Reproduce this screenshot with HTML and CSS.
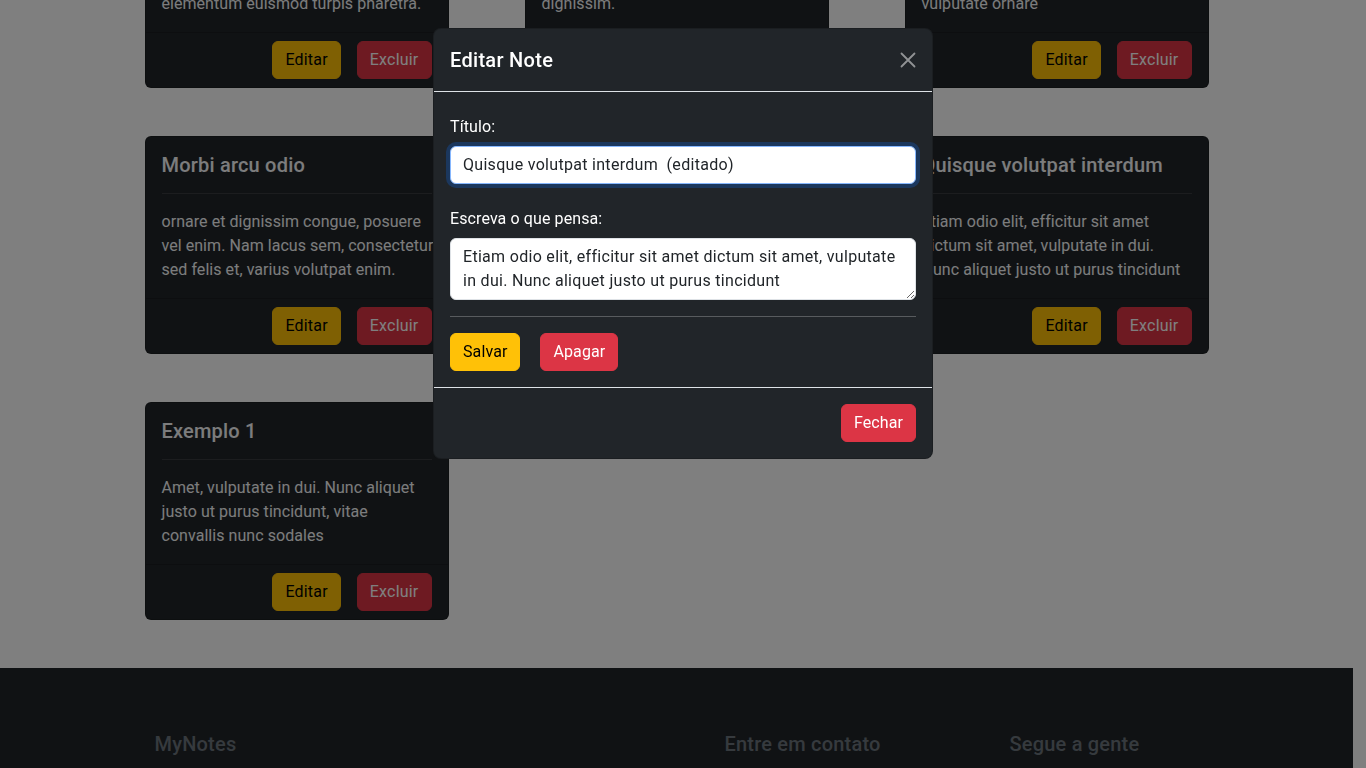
FILE: index.html
```html
<!DOCTYPE html>
<html lang="pt-BR">
<head>
<meta charset="utf-8">
<title>MyNotes</title>
<link rel="stylesheet" href="styles.css">
</head>
<body class="modal-open">
  <nav class="topbar">
    <div class="topbar-inner">
      <span class="brand">MyNotes</span>
      <span class="topbar-link">Notas</span>
    </div>
  </nav>

  <main class="page">
    <h1 class="page-title">Minhas notas</h1>
    <div class="notes">
      <article class="note">
        <div class="note-body">
          <h5 class="note-title">Pellentesque habitant</h5>
          <hr class="note-rule">
          <p class="note-text">Pellentesque habitant morbi<br>tristique senectus et netus et<br>elementum euismod turpis pharetra.</p>
        </div>
        <div class="note-footer">
          <button class="btn btn-warning">Editar</button>
          <button class="btn btn-danger">Excluir</button>
        </div>
      </article>
      <article class="note">
        <div class="note-body">
          <h5 class="note-title">Cras mattis</h5>
          <hr class="note-rule">
          <p class="note-text">Cras mattis consectetur purus<br>amet fermentum, integer posuere<br>dignissim.</p>
        </div>
        <div class="note-footer">
          <button class="btn btn-warning">Editar</button>
          <button class="btn btn-danger">Excluir</button>
        </div>
      </article>
      <article class="note">
        <div class="note-body">
          <h5 class="note-title">Aenean lacinia</h5>
          <hr class="note-rule">
          <p class="note-text">Aenean lacinia bibendum nulla<br>consectetur. Curabitur blandit<br>vulputate ornare</p>
        </div>
        <div class="note-footer">
          <button class="btn btn-warning">Editar</button>
          <button class="btn btn-danger">Excluir</button>
        </div>
      </article>

      <article class="note">
        <div class="note-body">
          <h5 class="note-title">Morbi arcu odio</h5>
          <hr class="note-rule">
          <p class="note-text">ornare et dignissim congue, posuere<br>vel enim. Nam lacus sem, consectetur<br>sed felis et, varius volutpat enim.</p>
        </div>
        <div class="note-footer">
          <button class="btn btn-warning">Editar</button>
          <button class="btn btn-danger">Excluir</button>
        </div>
      </article>
      <article class="note">
        <div class="note-body">
          <h5 class="note-title">Donec ullamcorper</h5>
          <hr class="note-rule">
          <p class="note-text">Donec ullamcorper nulla non metus<br>auctor fringilla. Vivamus sagittis<br>lacus vel augue laoreet.</p>
        </div>
        <div class="note-footer">
          <button class="btn btn-warning">Editar</button>
          <button class="btn btn-danger">Excluir</button>
        </div>
      </article>
      <article class="note">
        <div class="note-body">
          <h5 class="note-title">Quisque volutpat interdum</h5>
          <hr class="note-rule">
          <p class="note-text">Etiam odio elit, efficitur sit amet<br>dictum sit amet, vulputate in dui.<br>Nunc aliquet justo ut purus tincidunt</p>
        </div>
        <div class="note-footer">
          <button class="btn btn-warning">Editar</button>
          <button class="btn btn-danger">Excluir</button>
        </div>
      </article>

      <article class="note">
        <div class="note-body">
          <h5 class="note-title">Exemplo 1</h5>
          <hr class="note-rule">
          <p class="note-text">Amet, vulputate in dui. Nunc aliquet<br>justo ut purus tincidunt, vitae<br>convallis nunc sodales</p>
        </div>
        <div class="note-footer">
          <button class="btn btn-warning">Editar</button>
          <button class="btn btn-danger">Excluir</button>
        </div>
      </article>
    </div>
  </main>

  <footer class="site-footer">
    <div class="footer-inner">
      <div class="footer-col">
        <h5 class="footer-title">MyNotes</h5>
        <p class="footer-text">Suas anotações, sempre à mão.</p>
      </div>
      <div class="footer-col">
        <h5 class="footer-title">Entre em contato</h5>
        <p class="footer-text">contato@mynotes.com</p>
      </div>
      <div class="footer-col">
        <h5 class="footer-title">Segue a gente</h5>
        <p class="footer-text">@mynotes</p>
      </div>
    </div>
  </footer>

  <div class="modal-backdrop"></div>

  <div class="modal" role="dialog" aria-modal="true">
    <div class="modal-dialog">
      <div class="modal-content">
        <div class="modal-header">
          <h5 class="modal-title">Editar Note</h5>
          <button class="btn-close" aria-label="Fechar">
            <svg width="16" height="16" viewBox="0 0 16 16" aria-hidden="true">
              <path d="M1.5 1.5 L14.5 14.5 M14.5 1.5 L1.5 14.5" stroke="#fff" stroke-width="1.8" stroke-linecap="round" fill="none"/>
            </svg>
          </button>
        </div>
        <div class="modal-body">
          <div class="field">
            <label class="form-label" for="titulo">Título:</label>
            <input class="form-control is-focused" id="titulo" type="text" value="Quisque volutpat interdum  (editado)">
          </div>
          <div class="field">
            <label class="form-label" for="texto">Escreva o que pensa:</label>
            <textarea class="form-control form-area" id="texto" rows="2">Etiam odio elit, efficitur sit amet dictum sit amet, vulputate in dui. Nunc aliquet justo ut purus tincidunt</textarea>
          </div>
          <hr class="modal-rule">
          <div class="modal-actions">
            <button class="btn btn-warning-solid">Salvar</button>
            <button class="btn btn-danger-solid">Apagar</button>
          </div>
        </div>
        <div class="modal-footer">
          <button class="btn btn-danger-solid">Fechar</button>
        </div>
      </div>
    </div>
  </div>

  <script src="app.js"></script>
</body>
</html>
```

FILE: styles.css
```css
* {
  box-sizing: border-box;
}

body {
  margin: 0;
  padding-right: 13px;
  background: #fff;
  color: #212529;
  font-family: Roboto, "Noto Sans", sans-serif;
  font-size: 16px;
  line-height: 1.5;
  overflow: hidden;
}

/* top navigation (scrolled out of view) */
.topbar {
  background: #212529;
  color: #fff;
}

.topbar-inner {
  max-width: 1140px;
  margin: 0 auto;
  padding: 14px 12px;
  display: flex;
  gap: 24px;
  align-items: center;
}

.brand {
  font-size: 20px;
  font-weight: 500;
}

.topbar-link {
  color: #adb5bd;
}

/* notes */
.page {
  max-width: 1140px;
  margin: 0 auto;
}

.page-title {
  margin: 32px 0 48px;
  text-align: center;
  font-weight: 500;
  font-size: 32px;
}

.notes {
  display: grid;
  grid-template-columns: repeat(3, 1fr);
  row-gap: 48px;
  justify-items: center;
}

.note {
  width: 304px;
  display: flex;
  flex-direction: column;
  background: #212529;
  color: #f8f9fa;
  border: 1px solid rgba(0, 0, 0, 0.175);
  border-radius: 6px;
  overflow: hidden;
}

.note-body {
  flex: 1;
  padding: 16px;
}

.note-title {
  margin: 0;
  font-size: 20px;
  font-weight: 500;
  line-height: 1.2;
  letter-spacing: 0.2px;
  white-space: nowrap;
}

.note-rule {
  margin: 16px 0;
  border: 0;
  border-top: 1px solid currentColor;
  opacity: 0.25;
}

.note-text {
  margin: 0;
  white-space: nowrap;
  letter-spacing: 0.05px;
}

.note-footer {
  display: flex;
  justify-content: flex-end;
  gap: 16px;
  padding: 8px 16px;
  border-top: 1px solid rgba(0, 0, 0, 0.175);
  background: rgba(33, 37, 41, 0.03);
}

/* buttons */
.btn {
  font-family: inherit;
  font-size: 16px;
  line-height: 24px;
  letter-spacing: 0.1px;
  padding: 6px 12px;
  border: 1px solid transparent;
  border-radius: 6px;
  cursor: pointer;
}

.btn-warning,
.btn-warning-solid {
  background: #ffc107;
  border-color: #ffc107;
  color: #000;
}

.btn-danger,
.btn-danger-solid {
  background: #dc3545;
  border-color: #dc3545;
  color: #fff;
}

.note-footer .btn {
  letter-spacing: 0.2px;
}

/* footer */
.site-footer {
  margin-top: 48px;
  background: #212529;
  color: #6c757d;
  padding: 64px 0 64px;
}

.footer-inner {
  max-width: 1140px;
  margin: 0 auto;
  padding-left: 48px;
  display: grid;
  grid-template-columns: 570px 285px 1fr;
}

.footer-title {
  margin: 0 0 8px;
  font-size: 20px;
  font-weight: 500;
  line-height: 1.2;
  letter-spacing: 0.2px;
}

.footer-text {
  margin: 0;
}

/* modal */
.modal-backdrop {
  position: fixed;
  inset: 0;
  background: rgba(0, 0, 0, 0.5);
  z-index: 10;
}

.modal {
  position: fixed;
  inset: 0;
  z-index: 20;
  overflow: hidden;
}

.modal-dialog {
  width: 500px;
  margin: 28px auto;
}

.modal-content {
  background: #212529;
  color: #fff;
  border: 1px solid rgba(0, 0, 0, 0.175);
  border-radius: 8px;
}

.modal-header {
  display: flex;
  align-items: center;
  justify-content: space-between;
  padding: 16px;
  border-bottom: 1px solid #dee2e6;
}

.modal-title {
  margin: 0;
  font-size: 20px;
  font-weight: 500;
  line-height: 30px;
  letter-spacing: 0.3px;
}

.btn-close {
  width: 16px;
  height: 16px;
  padding: 0;
  border: 0;
  background: transparent;
  opacity: 0.5;
  display: flex;
}

.modal-body {
  padding: 16px;
}

.field {
  display: flex;
  flex-direction: column;
}

.field + .field {
  margin-top: 16px;
}

.form-label {
  margin: 7px 0;
  letter-spacing: 0.1px;
}

.form-control {
  display: block;
  width: 100%;
  padding: 6px 12px;
  font-family: inherit;
  font-size: 16px;
  line-height: 24px;
  letter-spacing: 0.3px;
  color: #212529;
  background: #fff;
  border: 1px solid #dee2e6;
  border-radius: 6px;
  outline: none;
}

.is-focused {
  border-color: #86b7fe;
  box-shadow: 0 0 0 4px rgba(13, 110, 253, 0.25);
}

.form-area {
  resize: vertical;
  height: 62px;
}

.modal-rule {
  margin: 16px 0;
  border: 0;
  border-top: 1px solid #fff;
  opacity: 0.25;
}

.modal-actions {
  display: flex;
  gap: 20px;
}

.modal-footer {
  display: flex;
  justify-content: flex-end;
  padding: 16px;
  border-top: 1px solid #dee2e6;
}
```

FILE: app.js
```js
var input = document.getElementById('titulo');
input.focus({ preventScroll: true });
input.setSelectionRange(33, 33);

var firstNote = document.querySelector('.note');
var rect = firstNote.getBoundingClientRect();
window.scrollTo(0, window.scrollY + rect.bottom - 88);
```
